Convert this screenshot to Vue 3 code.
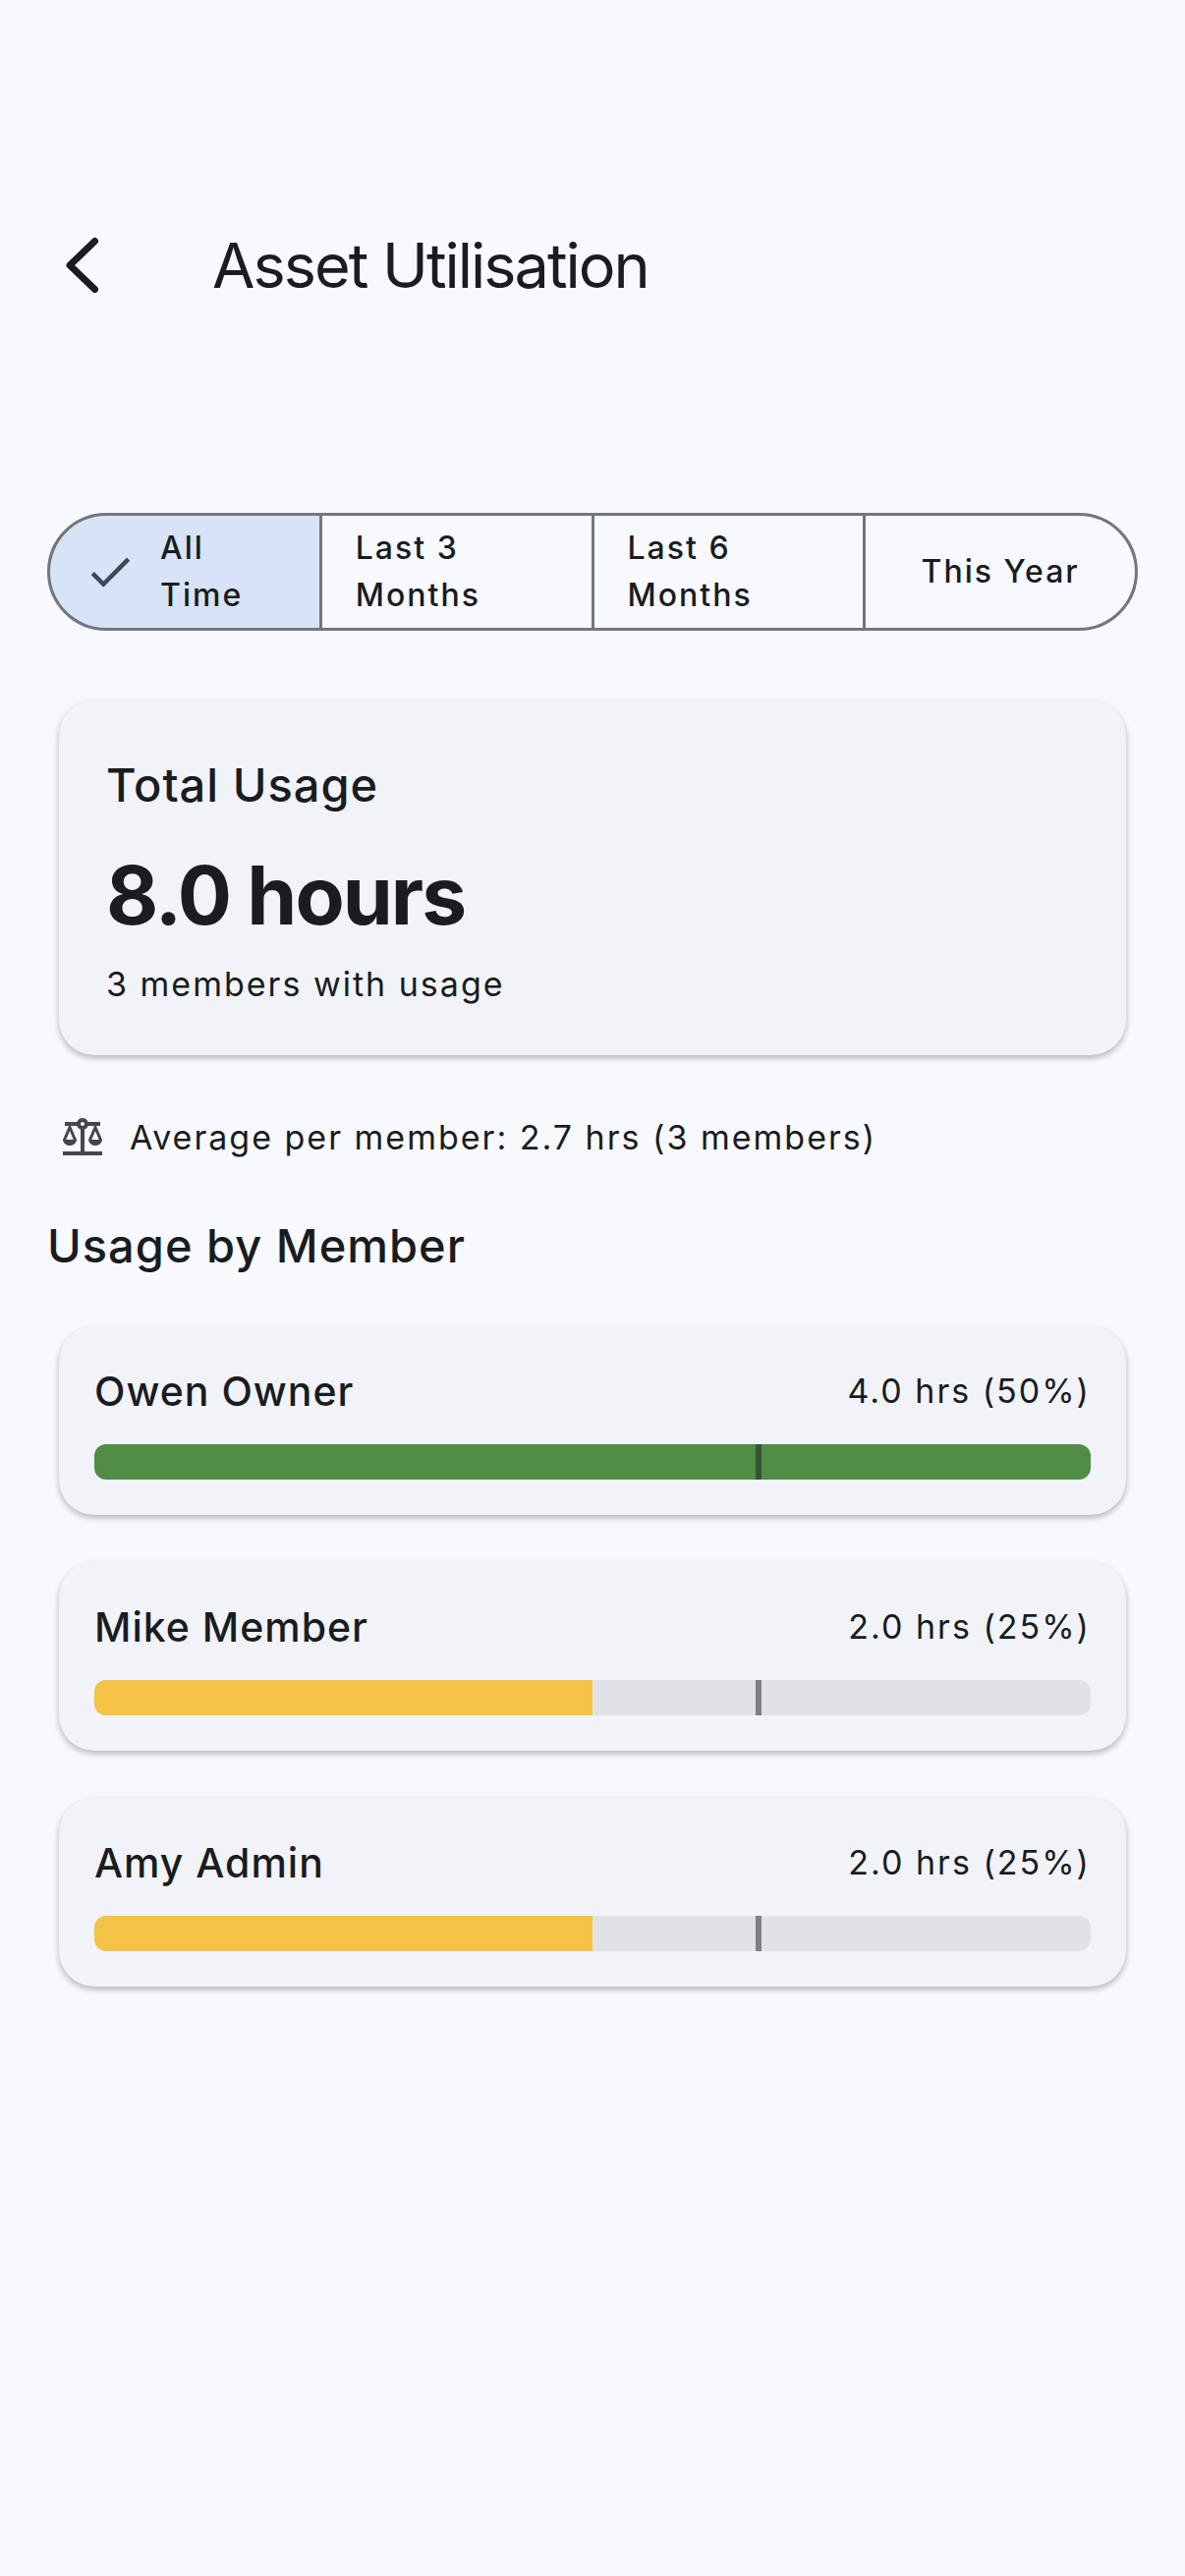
<script setup>
import { ref } from 'vue'

const ranges = ['All Time', 'Last 3 Months', 'Last 6 Months', 'This Year']
const selected = ref('All Time')

const members = [
  { name: 'Owen Owner', usage: '4.0 hrs (50%)', fill: 100, tone: 'high' },
  { name: 'Mike Member', usage: '2.0 hrs (25%)', fill: 50, tone: 'low' },
  { name: 'Amy Admin', usage: '2.0 hrs (25%)', fill: 50, tone: 'low' },
]
const averageMark = 200 / 3
</script>

<template>
  <div class="screen">
    <header class="app-bar">
      <button class="back" type="button" aria-label="Back">
        <svg viewBox="0 0 72 72" aria-hidden="true">
          <path d="M48.500 11.500 L23 36 L48.500 60.500" />
        </svg>
      </button>
      <h1>Asset Utilisation</h1>
    </header>

    <main>
      <div class="segments" role="group" aria-label="Time range">
        <button
          v-for="range in ranges"
          :key="range"
          type="button"
          class="segment"
          :class="{ active: range === selected }"
          :aria-pressed="range === selected"
          @click="selected = range"
        >
          <svg v-if="range === selected" viewBox="0 0 24 24" aria-hidden="true">
            <path d="M9 16.17 4.83 12l-1.42 1.41L9 19 21 7l-1.41-1.41z" />
          </svg>
          <span>{{ range }}</span>
        </button>
      </div>

      <section class="card total">
        <h2>Total Usage</h2>
        <p class="hours">8.0 hours</p>
        <p class="body">3 members with usage</p>
      </section>

      <div class="average">
        <svg viewBox="0 0 24 24" aria-hidden="true">
          <path
            fill-rule="evenodd"
            d="M13 7.83c.85-.3 1.53-.98 1.83-1.83H18l-3 7c0 1.66 1.57 3 3.5 3s3.5-1.34 3.5-3l-3-7h2V4h-6.17C14.42 2.83 13.31 2 12 2s-2.42.83-2.83 2H3v2h2l-3 7c0 1.66 1.57 3 3.5 3S9 14.66 9 13L6 6h3.17c.3.85.98 1.53 1.83 1.83V19H2v2h20v-2h-9V7.83zM20.37 13h-3.74l1.87-4.36L20.37 13zM7.37 13H3.63L5.5 8.64 7.37 13zM12 6c-.55 0-1-.45-1-1s.45-1 1-1 1 .45 1 1-.45 1-1 1z"
          />
        </svg>
        <p class="body">Average per member: 2.7 hrs (3 members)</p>
      </div>

      <h2 class="list-title">Usage by Member</h2>

      <ul class="members">
        <li v-for="member in members" :key="member.name" class="card member">
          <div class="row">
            <h3>{{ member.name }}</h3>
            <p class="body">{{ member.usage }}</p>
          </div>
          <div class="track">
            <div class="fill" :class="member.tone" :style="{ width: member.fill + '%' }"></div>
            <div class="mark" :style="{ left: averageMark + '%' }"></div>
          </div>
        </li>
      </ul>
    </main>
  </div>
</template>

<style>
body {
  margin: 0;
  background: #f8f9ff;
}
</style>

<style scoped>
.screen {
  min-height: 100vh;
  box-sizing: border-box;
  padding-top: 186px;
  background: #f8f9ff;
  color: #191c20;
  font-family: Inter, "Liberation Sans", sans-serif;
}
h1,
h2,
h3,
p,
ul {
  margin: 0;
  padding: 0;
}
button {
  border: 0;
  padding: 0;
  background: none;
  color: inherit;
  font: inherit;
  cursor: pointer;
}
.app-bar {
  display: flex;
  align-items: center;
  gap: 48px;
  height: 168px;
  padding: 0 48px;
}
.back {
  width: 120px;
  height: 120px;
}
.back svg {
  display: block;
  width: 72px;
  height: 72px;
  fill: none;
  stroke: #191c20;
  stroke-width: 7;
  stroke-linecap: round;
  stroke-linejoin: round;
}
h1 {
  font-size: 63px;
  line-height: 84px;
  font-weight: 400;
  letter-spacing: -2px;
}
main {
  padding: 168px 48px 48px;
}
.segments {
  display: grid;
  grid-template-columns: repeat(4, minmax(0, 1fr));
  gap: 3px;
  min-height: 120px;
  box-sizing: border-box;
  border: 3px solid #72777f;
  border-radius: 60px;
  background: #72777f;
  overflow: hidden;
}
.segment {
  display: flex;
  align-items: center;
  justify-content: center;
  gap: 24px;
  padding: 0 34px;
  background: #f8f9ff;
  font-size: 32px;
  line-height: 48px;
  font-weight: 500;
  letter-spacing: 2px;
  text-align: left;
}
.segment.active {
  background: #d7e3f7;
}
.segment svg {
  flex: none;
  width: 54px;
  height: 54px;
  fill: #3c4858;
}
.card {
  margin: 0 12px;
  border-radius: 36px;
  background: #f2f3f9;
  box-shadow: 0 3px 6px rgba(0, 0, 0, 0.28);
}
.total {
  margin-top: 71px;
  padding: 48px;
}
h2 {
  font-size: 47px;
  line-height: 76px;
  font-weight: 500;
  letter-spacing: 1px;
}
.hours {
  margin: 20px 0 11px;
  font-size: 82px;
  line-height: 110px;
  font-weight: 700;
  letter-spacing: -2px;
}
.body {
  font-size: 34px;
  line-height: 48px;
  font-weight: 400;
  letter-spacing: 2px;
}
.average {
  display: flex;
  align-items: center;
  gap: 24px;
  margin: 60px 12px 48px;
}
.average svg {
  width: 48px;
  height: 48px;
  fill: #43474e;
}
.members {
  display: flex;
  flex-direction: column;
  gap: 48px;
  margin-top: 44px;
  list-style: none;
}
.member {
  padding: 36px;
}
.row {
  display: flex;
  align-items: center;
  justify-content: space-between;
  margin-bottom: 24px;
}
h3 {
  font-size: 41px;
  line-height: 60px;
  font-weight: 500;
  letter-spacing: 1px;
}
.track {
  position: relative;
  height: 36px;
  border-radius: 12px;
  overflow: hidden;
  background: #e1e2e8;
}
.fill {
  height: 100%;
}
.high {
  background: #508c46;
}
.low {
  background: #f4c244;
}
.mark {
  position: absolute;
  top: 0;
  bottom: 0;
  width: 6px;
  margin-left: -3px;
  background: rgba(25, 28, 32, 0.5);
}
</style>
